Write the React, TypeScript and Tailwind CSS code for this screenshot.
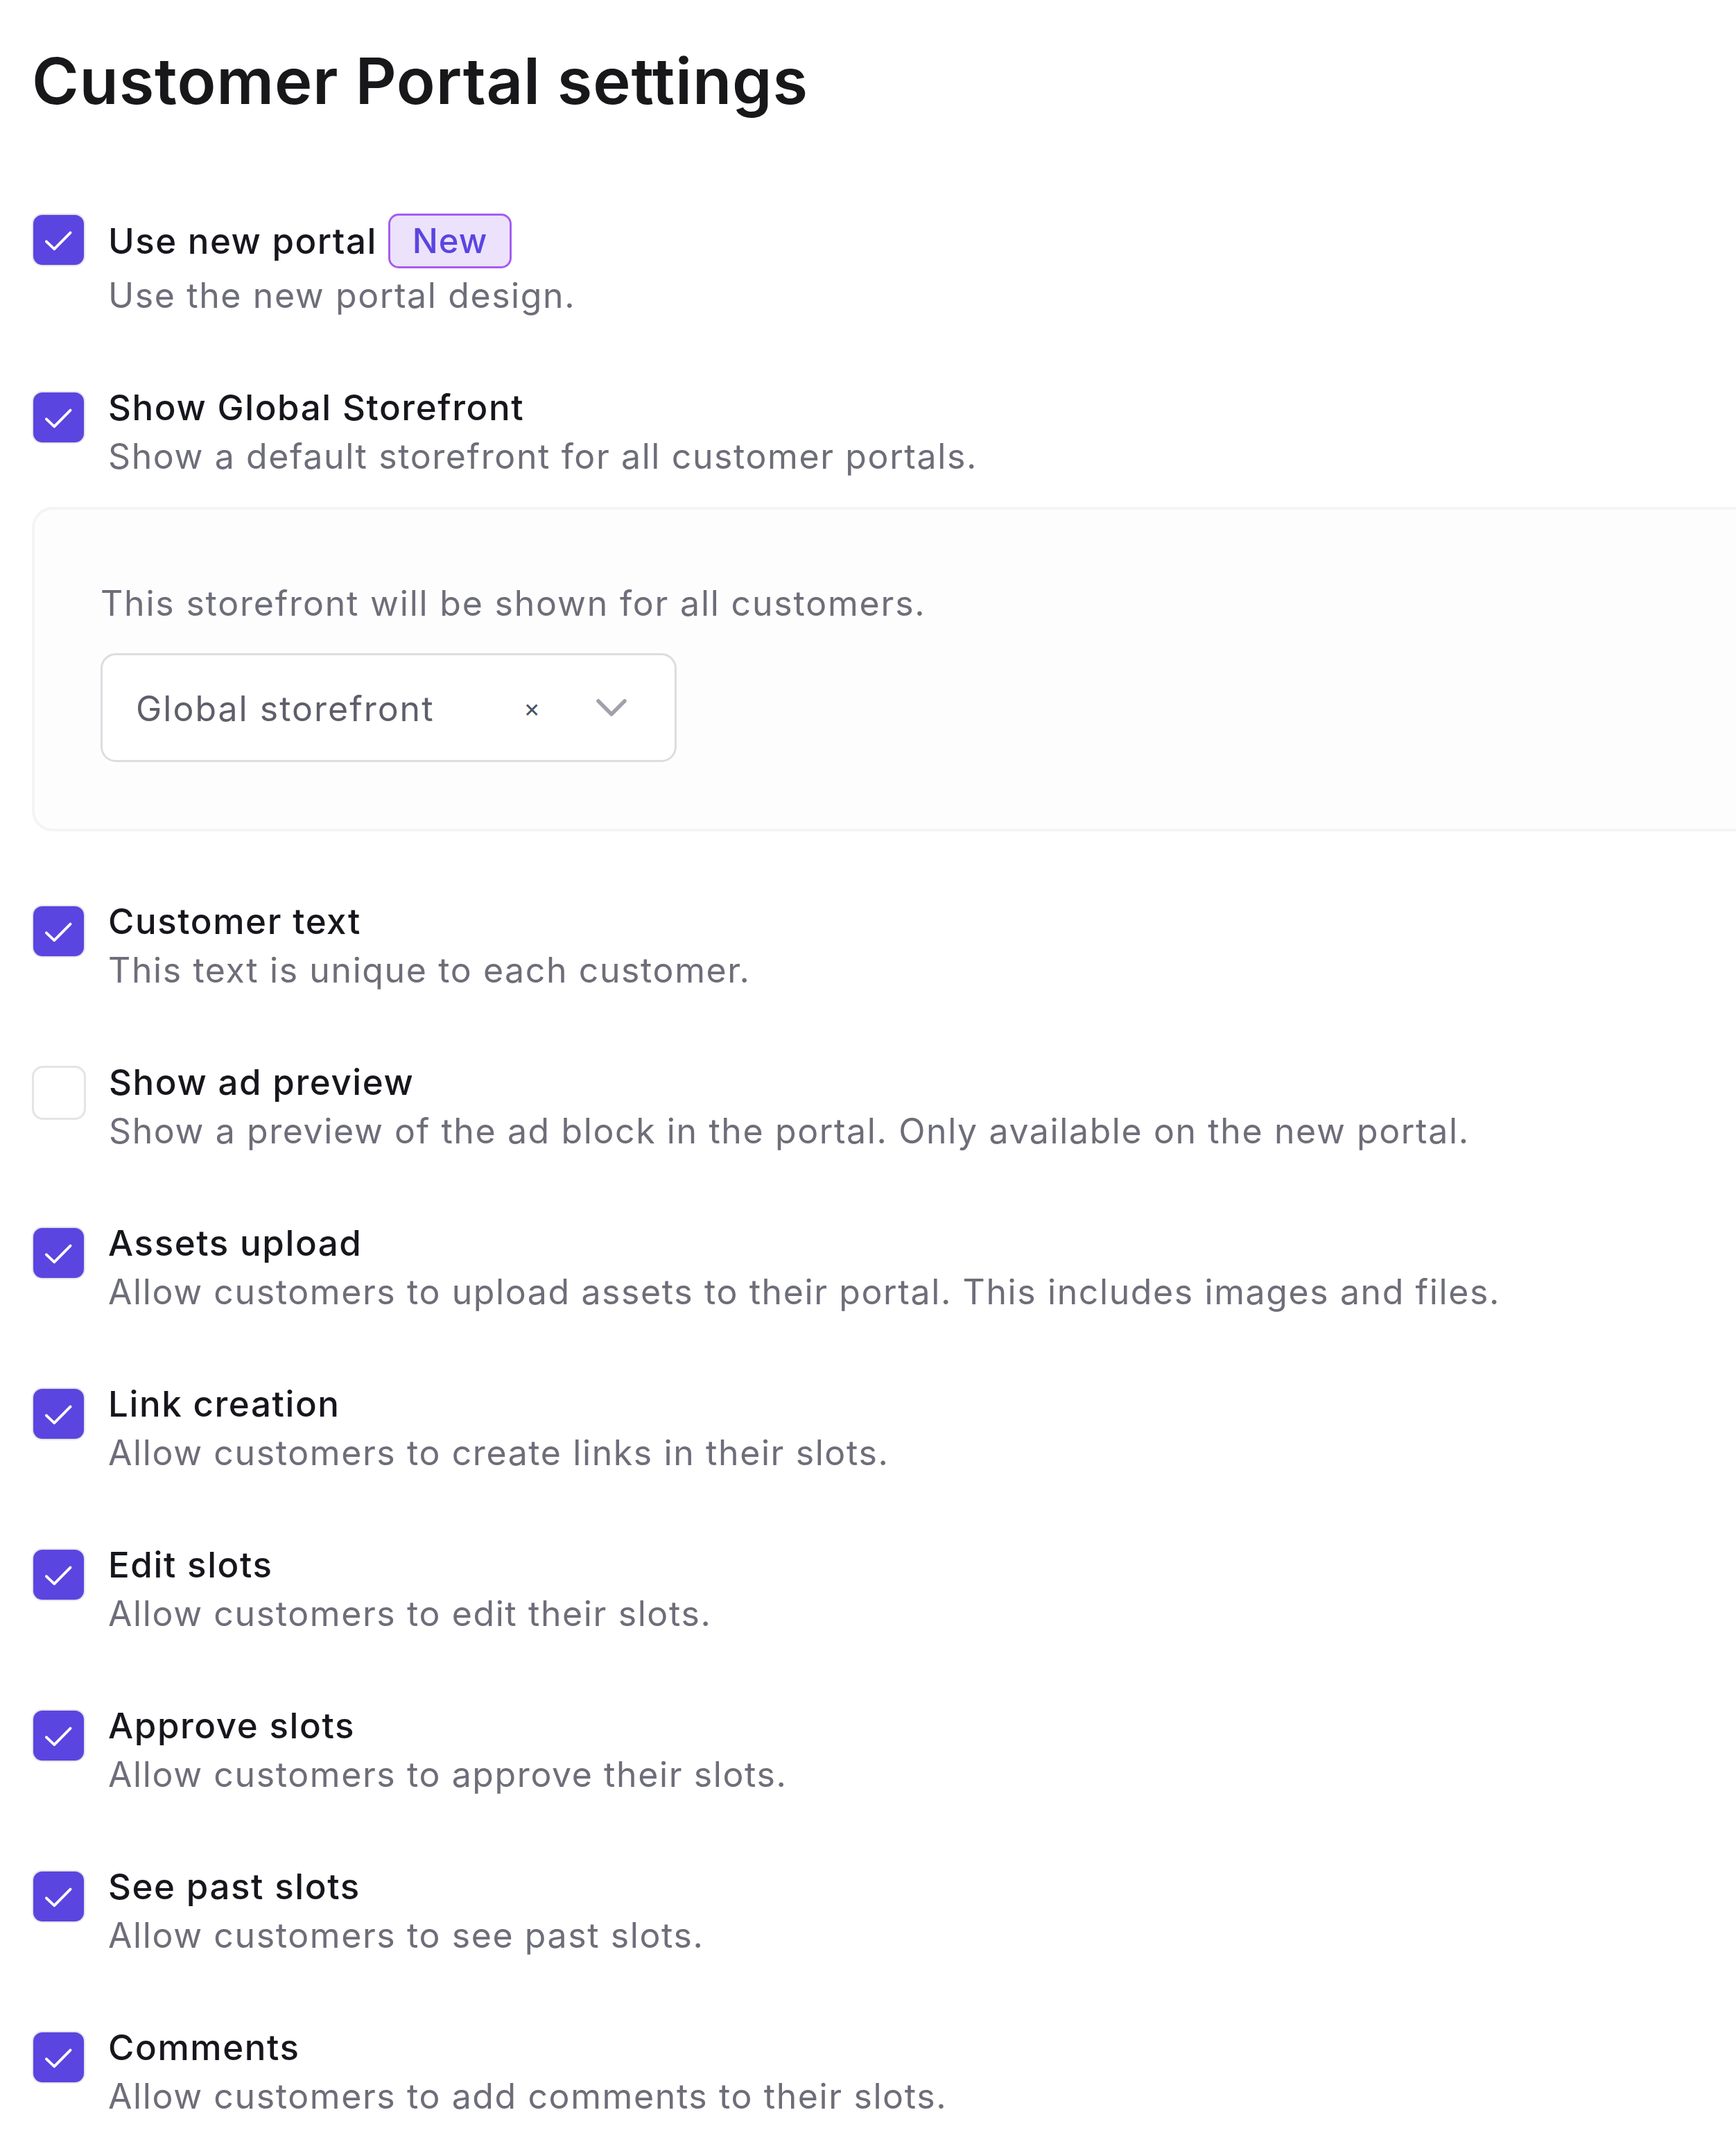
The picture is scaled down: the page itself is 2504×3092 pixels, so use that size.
type Setting = {
  label: string;
  description: string;
  checked: boolean;
  badge?: string;
};

const SETTINGS: Setting[] = [
  { label: "Use new portal", description: "Use the new portal design.", checked: true, badge: "New" },
  { label: "Show Global Storefront", description: "Show a default storefront for all customer portals.", checked: true },
  { label: "Customer text", description: "This text is unique to each customer.", checked: true },
  {
    label: "Show ad preview",
    description: "Show a preview of the ad block in the portal. Only available on the new portal.",
    checked: false,
  },
  {
    label: "Assets upload",
    description: "Allow customers to upload assets to their portal. This includes images and files.",
    checked: true,
  },
  { label: "Link creation", description: "Allow customers to create links in their slots.", checked: true },
  { label: "Edit slots", description: "Allow customers to edit their slots.", checked: true },
  { label: "Approve slots", description: "Allow customers to approve their slots.", checked: true },
  { label: "See past slots", description: "Allow customers to see past slots.", checked: true },
  { label: "Comments", description: "Allow customers to add comments to their slots.", checked: true },
];

function Checkbox({ checked }: { checked: boolean }) {
  if (!checked) {
    return <div className="w-[78px] h-[78px] shrink-0 rounded-[16px] border-[3px] border-[#e4e4e7] bg-white" />;
  }
  return (
    <div className="w-[77px] h-[76px] shrink-0 rounded-[15px] border-[2px] border-[#e4e4e7] bg-[#5a45e0] flex items-center justify-center">
      <svg viewBox="0 0 24 24" className="w-[62px] h-[62px]" fill="none">
        <path d="M5 12.9l4.4 4.2L18.4 8" stroke="white" strokeWidth="1.5" strokeLinecap="round" strokeLinejoin="round" />
      </svg>
    </div>
  );
}

function StorefrontCard() {
  return (
    <div className="mt-[41px] -mr-[200px] rounded-[30px] border-[4px] border-[#f4f4f5] bg-[#fdfdfd] pl-[95px] pt-[103px] pb-[96px]">
      <p className="text-[50px] leading-[64px] tracking-[1.8px] text-[#6e6e7a]">This storefront will be shown for all customers.</p>
      <div className="mt-[40px] w-[831px] h-[157px] rounded-[22px] border-[3px] border-[#dcdde1] bg-white flex items-center pl-[48px] pr-[68px]">
        <span className="flex-1 text-[50px] tracking-[2px] text-[#5f5f6b] pt-[3px]">Global storefront</span>
        <span className="text-[36px] text-[#4b5563] mr-[80px]">×</span>
        <svg viewBox="0 0 46 28" className="w-[46px] h-[28px]" fill="none">
          <path d="M4 4l19 19L42 4" stroke="#a1a1aa" strokeWidth="5.5" strokeLinecap="round" strokeLinejoin="round" />
        </svg>
      </div>
    </div>
  );
}

function SettingRow({ setting }: { setting: Setting }) {
  return (
    <div className="flex items-start gap-[33px]">
      <Checkbox checked={setting.checked} />
      <div className="flex-1 min-w-0">
        {setting.badge ? (
          <div className="flex items-center gap-[16px] h-[79px]">
            <span className="text-[51px] leading-[64px] tracking-[1.5px] font-medium text-[#16161d]">{setting.label}</span>
            <span className="h-[79px] px-[32px] flex items-center rounded-[15px] border-[3px] border-[#a55df0] bg-[#ece2fb] text-[49px] tracking-[1px] font-medium text-[#5a45e0]">
              {setting.badge}
            </span>
          </div>
        ) : (
          <div className="text-[51px] leading-[48px] tracking-[1.6px] font-medium text-[#16161d]">{setting.label}</div>
        )}
        <div
          className={`text-[50px] leading-[64px] tracking-[1.6px] text-[#6e6e7a] ${setting.badge ? "mt-[7px]" : "mt-[14px]"}`}
        >
          {setting.description}
        </div>
      </div>
    </div>
  );
}

export default function App() {
  return (
    <div className="min-h-screen bg-white font-['Inter','Noto_Sans',sans-serif] overflow-hidden pl-[46px] pt-[62px] pb-[40px]">
      <h1 className="text-[92px] leading-[110px] font-semibold text-[#18181b] tracking-[0.8px]">Customer Portal settings</h1>
      <div className="mt-[136px] flex flex-col gap-[106px]">
        <SettingRow setting={SETTINGS[0]} />
        <div>
          <SettingRow setting={SETTINGS[1]} />
          <StorefrontCard />
        </div>
        {SETTINGS.slice(2).map((s) => (
          <SettingRow key={s.label} setting={s} />
        ))}
      </div>
    </div>
  );
}
